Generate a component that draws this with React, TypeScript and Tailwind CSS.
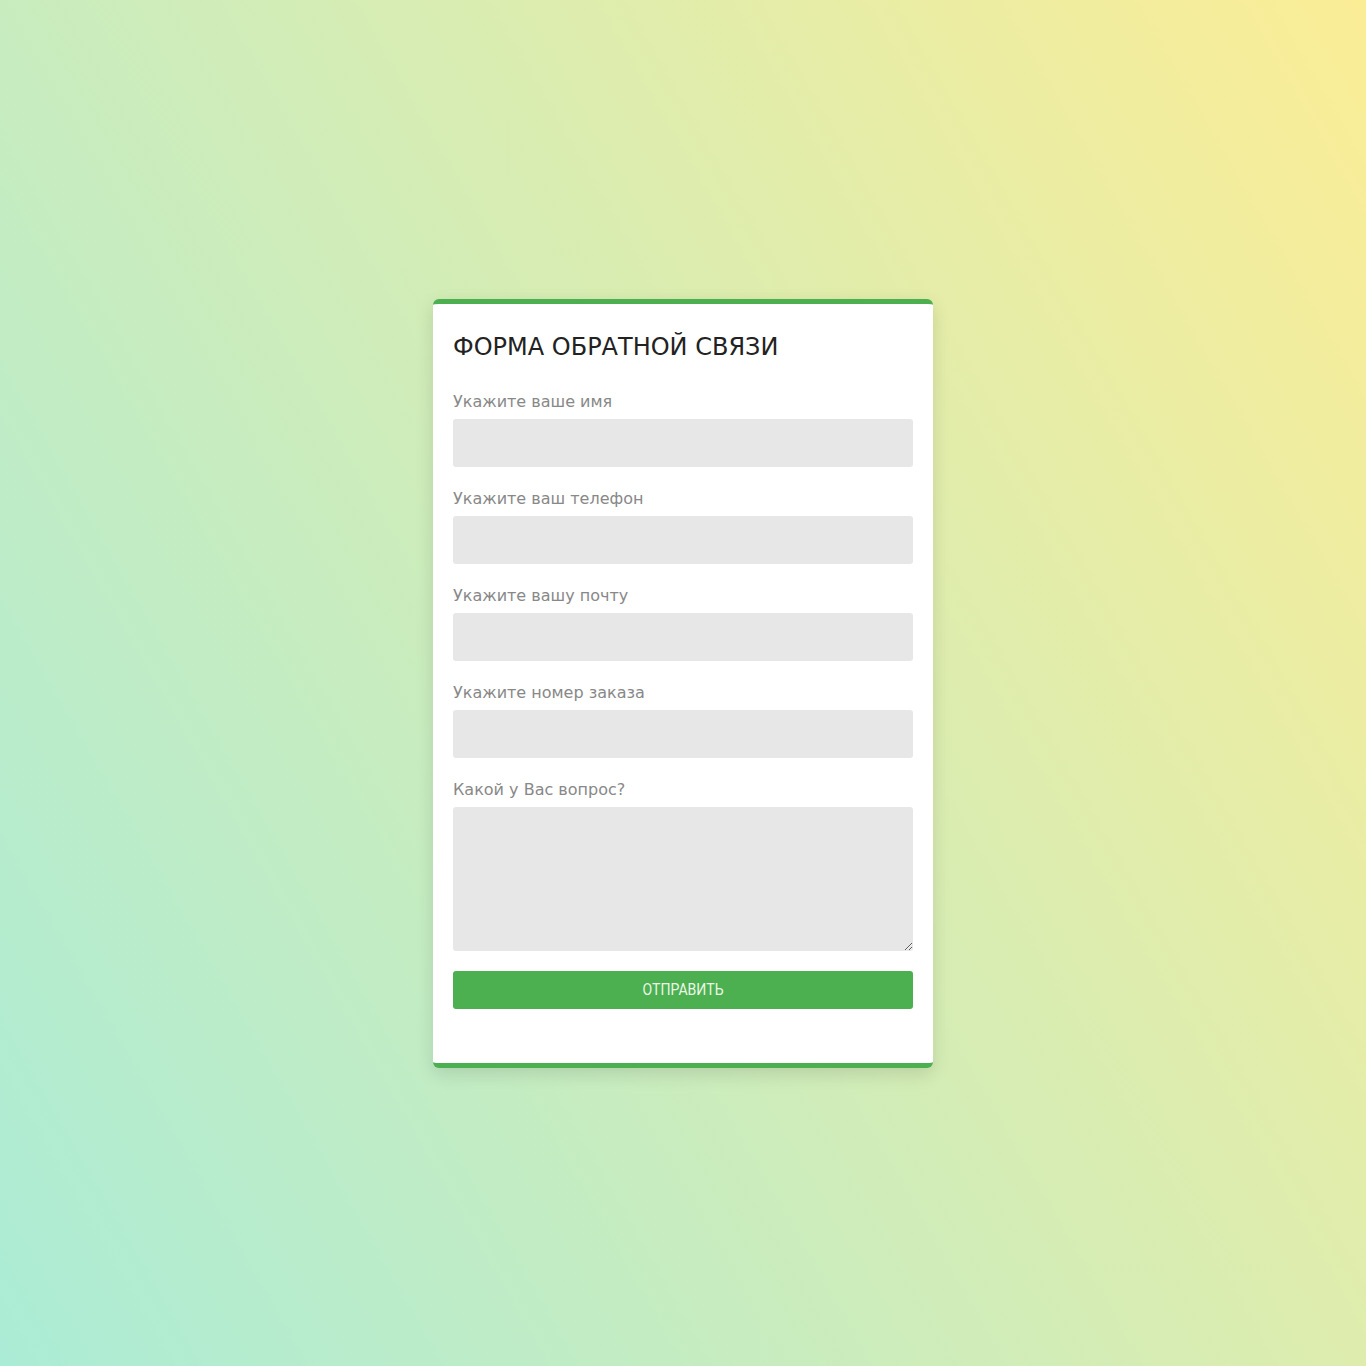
import React from "react";

const fields = [
  "Укажите ваше имя",
  "Укажите ваш телефон",
  "Укажите вашу почту",
  "Укажите номер заказа",
];

export default function App() {
  return (
    <div
      className="min-h-screen w-full flex items-center justify-center bg-[linear-gradient(60deg,#abecd6,#fbed96)]"
      style={{ fontFamily: '"DejaVu Sans", sans-serif' }}
    >
      <form
        className="w-[500px] bg-white rounded-[6px] border-t-[5px] border-b-[5px] border-[#4caf50] px-[20px] pt-[28px] pb-[54px] shadow-[0_6px_18px_rgba(0,0,0,0.12)]"
        onSubmit={(e) => e.preventDefault()}
      >
        <h2 className="text-[24px] leading-[30px] text-[#222] font-normal mb-[29px]">
          ФОРМА ОБРАТНОЙ СВЯЗИ
        </h2>
        {fields.map((f) => (
          <div key={f} className="mb-[21px]">
            <label className="block text-[16px] leading-[21px] text-[#888] mb-[7px]">
              {f}
            </label>
            <input
              type="text"
              className="block w-full h-[48px] bg-[#e7e7e7] rounded-[3px] outline-none px-3"
            />
          </div>
        ))}
        <div className="mb-[20px]">
          <label className="block text-[16px] leading-[21px] text-[#888] mb-[7px]">
            Какой у Вас вопрос?
          </label>
          <textarea className="block w-full h-[144px] bg-[#e7e7e7] rounded-[3px] outline-none px-3 py-2" />
        </div>
        <button
          type="submit"
          className="block w-full h-[38px] bg-[#4caf50] rounded-[3px] text-[#eaf7e6] text-[16px]"
          style={{ fontFamily: 'Roboto, sans-serif' }}
        >
          <span className="inline-block scale-x-[0.88]">ОТПРАВИТЬ</span>
        </button>
      </form>
    </div>
  );
}
